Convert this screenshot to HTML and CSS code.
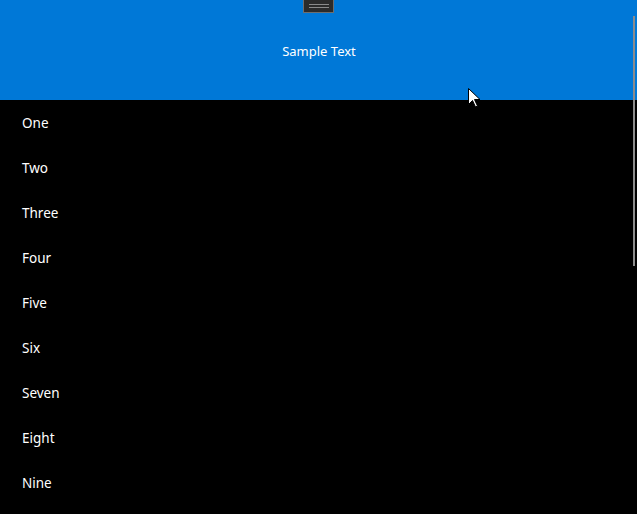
FILE: index.html
```html
<!DOCTYPE html>
<html>
<head>
<meta charset="utf-8">
<link rel="stylesheet" href="styles.css">
</head>
<body>
<div class="app">
  <header class="header">
    <div class="grip"><span class="grip-line"></span><span class="grip-line"></span></div>
    <span class="title">Sample Text</span>
  </header>
  <ul class="list">
    <li class="item">One</li>
    <li class="item">Two</li>
    <li class="item">Three</li>
    <li class="item">Four</li>
    <li class="item">Five</li>
    <li class="item">Six</li>
    <li class="item">Seven</li>
    <li class="item">Eight</li>
    <li class="item">Nine</li>
  </ul>
  <div class="scrollbar"></div>
  <svg class="cursor" width="13" height="20" viewBox="0 0 13 20">
    <path d="M0.5 0.5 L0.5 16.5 L4.5 12.5 L7.5 19 L9.5 18 L6.5 11.5 L12 11.5 Z" fill="#fff" stroke="#000" stroke-width="1"/>
  </svg>
</div>
</body>
</html>
```
FILE: styles.css
```css
html, body {
  margin: 0;
  padding: 0;
  background: #000;
  overflow: hidden;
}
.app {
  position: relative;
  width: 637px;
  height: 514px;
  overflow: hidden;
  font-family: "Noto Sans", "Open Sans", sans-serif;
  color: #fff;
}
.header {
  height: 100px;
  background: #0078d7;
  display: flex;
  align-items: center;
  justify-content: center;
  position: relative;
}
.title {
  font-size: 13px;
  line-height: 1;
  margin-top: 3px;
  margin-left: 1px;
}
.grip {
  position: absolute;
  top: 0;
  left: 303px;
  width: 29px;
  height: 12px;
  background: #2b2b2b;
  border: 1px solid #6e6e6e;
  border-top: none;
  display: flex;
  flex-direction: column;
  align-items: center;
  justify-content: center;
  gap: 2px;
}
.grip-line {
  display: block;
  width: 20px;
  height: 1px;
  background: #8a8a8a;
}
.list {
  list-style: none;
  margin: 0;
  padding: 0;
}
.item {
  height: 45px;
  display: flex;
  align-items: center;
  padding-left: 22px;
  font-size: 13.5px;
}
.scrollbar {
  position: absolute;
  top: 16px;
  left: 633px;
  width: 2px;
  height: 250px;
  background: #8c8c8c;
}
.cursor {
  position: absolute;
  left: 468px;
  top: 88px;
}
```
